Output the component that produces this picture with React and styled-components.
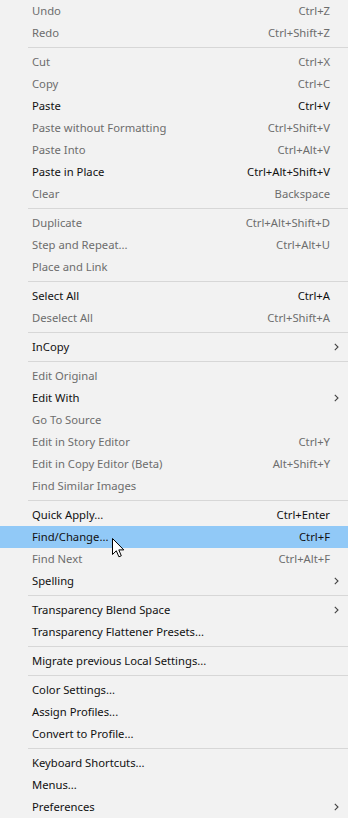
import React from 'react';
import styled, { createGlobalStyle } from 'styled-components';

const GlobalStyle = createGlobalStyle`
    html, body {
        margin: 0;
        padding: 0;
        background: #f2f2f2;
    }
`

const items = [
    { label: 'Undo', shortcut: 'Ctrl+Z', disabled: true },
    { label: 'Redo', shortcut: 'Ctrl+Shift+Z', disabled: true },
    'sep',
    { label: 'Cut', shortcut: 'Ctrl+X', disabled: true },
    { label: 'Copy', shortcut: 'Ctrl+C', disabled: true },
    { label: 'Paste', shortcut: 'Ctrl+V' },
    { label: 'Paste without Formatting', shortcut: 'Ctrl+Shift+V', disabled: true },
    { label: 'Paste Into', shortcut: 'Ctrl+Alt+V', disabled: true },
    { label: 'Paste in Place', shortcut: 'Ctrl+Alt+Shift+V' },
    { label: 'Clear', shortcut: 'Backspace', disabled: true },
    'sep',
    { label: 'Duplicate', shortcut: 'Ctrl+Alt+Shift+D', disabled: true },
    { label: 'Step and Repeat...', shortcut: 'Ctrl+Alt+U', disabled: true },
    { label: 'Place and Link', disabled: true },
    'sep',
    { label: 'Select All', shortcut: 'Ctrl+A' },
    { label: 'Deselect All', shortcut: 'Ctrl+Shift+A', disabled: true },
    'sep',
    { label: 'InCopy', submenu: true },
    'sep',
    { label: 'Edit Original', disabled: true },
    { label: 'Edit With', submenu: true },
    { label: 'Go To Source', disabled: true },
    { label: 'Edit in Story Editor', shortcut: 'Ctrl+Y', disabled: true },
    { label: 'Edit in Copy Editor (Beta)', shortcut: 'Alt+Shift+Y', disabled: true },
    { label: 'Find Similar Images', disabled: true },
    'sep',
    { label: 'Quick Apply...', shortcut: 'Ctrl+Enter' },
    { label: 'Find/Change...', shortcut: 'Ctrl+F', active: true },
    { label: 'Find Next', shortcut: 'Ctrl+Alt+F', disabled: true },
    { label: 'Spelling', submenu: true },
    'sep',
    { label: 'Transparency Blend Space', submenu: true },
    { label: 'Transparency Flattener Presets...' },
    'sep',
    { label: 'Migrate previous Local Settings...' },
    'sep',
    { label: 'Color Settings...' },
    { label: 'Assign Profiles...' },
    { label: 'Convert to Profile...' },
    'sep',
    { label: 'Keyboard Shortcuts...' },
    { label: 'Menus...' },
    { label: 'Preferences', submenu: true },
];

const Chevron = () => (
    <svg width="5" height="8" viewBox="0 0 5 8">
        <path d="M0.8 0.8 L4 4 L0.8 7.2" fill="none" stroke="#444" strokeWidth="1.1" />
    </svg>
);

const Cursor = () => (
    <svg width="13" height="20" viewBox="0 0 13 20">
        <path
            d="M0.5 0.5 L0.5 16.5 L4.3 12.8 L6.9 18.8 L9.3 17.8 L6.8 11.9 L11.8 11.9 Z"
            fill="#fff"
            stroke="#000"
            strokeWidth="1"
        />
    </svg>
);

export default () => {
    return (
        <>
            <GlobalStyle />
            <Menu>
                {items.map((item, i) =>
                    item === 'sep' ? (
                        <Separator key={i} />
                    ) : (
                        <Row key={i} $disabled={item.disabled} $active={item.active}>
                            <Label>{item.label}</Label>
                            <Shortcut>{item.shortcut}</Shortcut>
                            <ArrowCell>{item.submenu && <Chevron />}</ArrowCell>
                            {item.active && (
                                <CursorWrap>
                                    <Cursor />
                                </CursorWrap>
                            )}
                        </Row>
                    )
                )}
            </Menu>
        </>
    );
};

const Menu = styled.div`
    width: 348px;
    height: 818px;
    background: #f2f2f2;
    display: flex;
    flex-flow: column;
    font-family: "Noto Sans", "Open Sans", sans-serif;
    font-size: 11.25px;
    overflow: hidden;
`
const Row = styled.div`
    position: relative;
    height: 22px;
    flex-shrink: 0;
    display: flex;
    align-items: center;
    padding-left: 32px;
    padding-bottom: 1px;
    box-sizing: border-box;
    color: ${p => (p.$disabled ? '#6d6d6d' : '#111')};
    background: ${p => (p.$active ? '#91c9f7' : 'transparent')};
`
const Label = styled.span`
    flex: 1;
    white-space: nowrap;
`
const Shortcut = styled.span`
    white-space: nowrap;
`
const ArrowCell = styled.span`
    width: 18px;
    height: 21px;
    display: flex;
    align-items: center;
    padding-left: 4px;
    box-sizing: border-box;
`
const CursorWrap = styled.div`
    position: absolute;
    left: 112px;
    top: 12px;
    line-height: 0;
`
const Separator = styled.div`
    height: 1px;
    flex-shrink: 0;
    margin: 3px 0 3px 28px;
    background: #d7d7d7;
`
